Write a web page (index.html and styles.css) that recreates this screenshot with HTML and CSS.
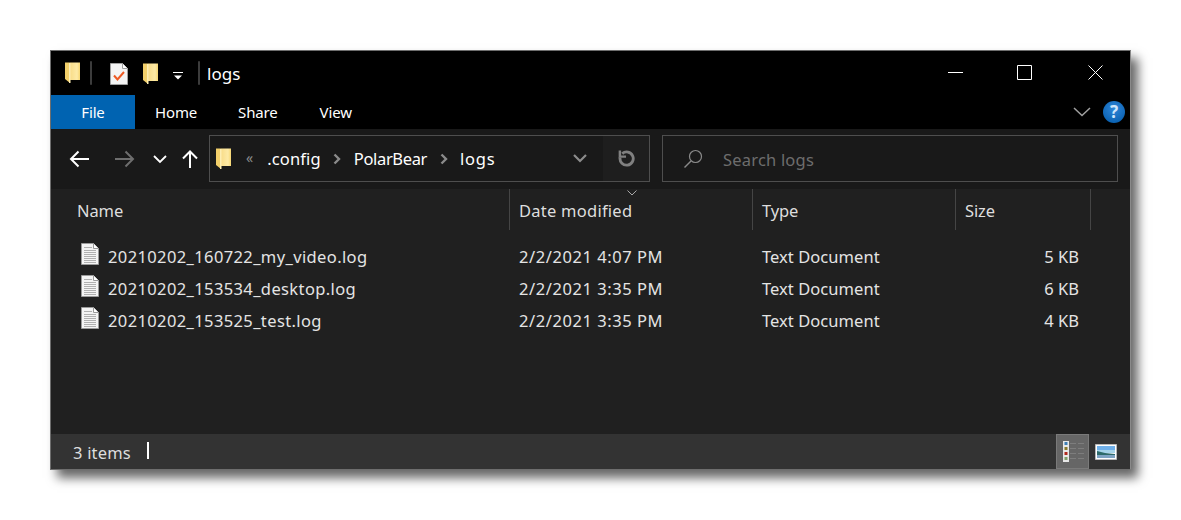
FILE: index.html
```html
<!DOCTYPE html>
<html lang="en">
<head>
<meta charset="utf-8">
<title>logs</title>
<link rel="stylesheet" href="styles.css">
</head>
<body>
<svg class="defs" width="0" height="0" aria-hidden="true">
  <defs>
    <linearGradient id="fg" x1="0" y1="0" x2="1" y2="0"><stop offset="0" stop-color="#f8dc88"/><stop offset=".7" stop-color="#fdeaa6"/><stop offset="1" stop-color="#f6d672"/></linearGradient>
    <symbol id="folder" viewBox="0 0 15 21">
      <path d="M5 .5h10v17.500H5z" fill="url(#fg)"/>
      <path d="M0 .5h5v20.500L0 17z" fill="#f2cf6a"/>
      <path d="M4 1h1.500v20H4z" fill="#fdeeb4"/>
    </symbol>
    <symbol id="doc" viewBox="0 0 18 22">
      <path d="M.5.500h12l5 5v16H.5z" fill="#f4f4f4" stroke="#9a9a9a"/>
      <path d="M12.500.500v5h5" fill="#fff" stroke="#9a9a9a"/>
      <path d="M3 4.500h8M3 7.500h12M3 9.500h12M3 11.500h12M3 13.500h12M3 15.500h12M3 17.500h12M3 19.500h12" stroke="#b0b0b0" fill="none"/>
    </symbol>
  </defs>
</svg>
<main class="window">
  <header class="titlebar">
    <svg class="qa-folder-a"><use href="#folder"/></svg>
    <span class="qa-sep qa-sep-a"></span>
    <svg class="qa-check" viewBox="0 0 18 22">
      <path d="M.5.500h12l5 5v16H.5z" fill="#f4f4f4" stroke="#a0a0a0"/>
      <path d="M12.500.500v5h5" fill="#fff" stroke="#a0a0a0"/>
      <path d="M4 12.500l3.500 4L14 9" fill="none" stroke="#ee5a24" stroke-width="2"/>
    </svg>
    <svg class="qa-folder-b"><use href="#folder"/></svg>
    <svg class="qa-drop" viewBox="0 0 10 8"><path d="M0 .5h10" stroke="#fff"/><path d="M1 3.500h8L5 7.500z" fill="#fff"/></svg>
    <span class="qa-sep qa-sep-b"></span>
    <span class="title">logs</span>
    <div class="caption">
      <svg class="cap-btn" viewBox="0 0 15 15"><path d="M0 7.500h15" stroke="#fff"/></svg>
      <svg class="cap-btn" viewBox="0 0 15 15"><path d="M.5.500h14v14H.5z" fill="none" stroke="#fff"/></svg>
      <svg class="cap-btn" viewBox="0 0 15 15"><path d="M.5.500l14 14M14.500.500l-14 14" fill="none" stroke="#fff"/></svg>
    </div>
  </header>
  <nav class="ribbon">
    <span class="tab tab-file">File</span>
    <span class="tab tab-home">Home</span>
    <span class="tab tab-share">Share</span>
    <span class="tab tab-view">View</span>
    <svg class="rib-chev" viewBox="0 0 18 10"><path d="M1 1l8 7.500L17 1" fill="none" stroke="#a0a0a0" stroke-width="1.500"/></svg>
    <span class="help">?</span>
  </nav>
  <section class="navbar">
    <svg class="nav-back" viewBox="0 0 20 20"><path d="M20 10H2M9.500 2.500 2 10l7.500 7.500" fill="none" stroke="#fff" stroke-width="2"/></svg>
    <svg class="nav-fwd" viewBox="0 0 20 20"><path d="M0 10h18M10.500 2.500 18 10l-7.500 7.500" fill="none" stroke="#6e6e6e" stroke-width="2"/></svg>
    <svg class="nav-down" viewBox="0 0 14 9"><path d="M1 1l6 6 6-6" fill="none" stroke="#fff" stroke-width="1.800"/></svg>
    <svg class="nav-up" viewBox="0 0 16 18"><path d="M8 18V1.500M1 8.500 8 1.500l7 7" fill="none" stroke="#fff" stroke-width="2"/></svg>
    <div class="address">
      <svg class="addr-folder"><use href="#folder"/></svg>
      <span class="crumb-more">«</span>
      <span class="crumb crumb-config">.config</span>
      <svg class="crumb-sep" viewBox="0 0 8 12"><path d="M1.500 1.500 6 6l-4.500 4.500" fill="none" stroke="#8a8a8a" stroke-width="2.400"/></svg>
      <span class="crumb crumb-polar">PolarBear</span>
      <svg class="crumb-sep" viewBox="0 0 8 12"><path d="M1.500 1.500 6 6l-4.500 4.500" fill="none" stroke="#8a8a8a" stroke-width="2.400"/></svg>
      <span class="crumb crumb-logs">logs</span>
      <svg class="addr-chev" viewBox="0 0 14 9"><path d="M1 1l6 6 6-6" fill="none" stroke="#8c8c8c" stroke-width="2.200"/></svg>
      <div class="refresh">
        <svg viewBox="0 0 18 18"><path d="M4.500 3.800A7 7 0 1 1 2.200 8" fill="none" stroke="#808080" stroke-width="3"/><path d="M2 .5v6.500h6.500" fill="none" stroke="#808080" stroke-width="2.600"/></svg>
      </div>
    </div>
    <div class="search">
      <svg class="search-icon" viewBox="0 0 20 20"><circle cx="12.500" cy="7.500" r="6" fill="none" stroke="#8a8a8a" stroke-width="1.200"/><path d="M8 12 1.500 18.500" stroke="#8a8a8a" stroke-width="1.400"/></svg>
      <span class="search-text">Search logs</span>
    </div>
  </section>
  <section class="list">
    <div class="cols">
      <div class="col col-name">Name</div>
      <div class="col col-date">Date modified<svg class="sort" viewBox="0 0 10 6"><path d="M.5.500 5 5 9.500.500" fill="none" stroke="#a8a8a8"/></svg></div>
      <div class="col col-type">Type</div>
      <div class="col col-size">Size</div>
    </div>
    <div class="row">
      <div class="cell-name"><svg class="doc"><use href="#doc"/></svg>20210202_160722_my_video.log</div>
      <div class="cell cell-date">2/2/2021 4:07 PM</div>
      <div class="cell">Text Document</div>
      <div class="cell cell-size">5 KB</div>
    </div>
    <div class="row">
      <div class="cell-name"><svg class="doc"><use href="#doc"/></svg>20210202_153534_desktop.log</div>
      <div class="cell cell-date">2/2/2021 3:35 PM</div>
      <div class="cell">Text Document</div>
      <div class="cell cell-size">6 KB</div>
    </div>
    <div class="row">
      <div class="cell-name"><svg class="doc"><use href="#doc"/></svg>20210202_153525_test.log</div>
      <div class="cell cell-date">2/2/2021 3:35 PM</div>
      <div class="cell">Text Document</div>
      <div class="cell cell-size">4 KB</div>
    </div>
  </section>
  <footer class="status">
    <span class="count">3 items</span>
    <span class="status-sep"></span>
    <div class="view-btn view-on">
      <svg viewBox="0 0 22 22" width="22" height="22">
        <path d="M1 0h6v21H1z" fill="#e8e8e8"/>
        <path d="M2.500 1h3v3h-3z" fill="#3f7fb5"/><path d="M2.500 6h3v3h-3z" fill="#8a7a2c"/><path d="M2.500 11h3v3h-3z" fill="#b02a1e"/><path d="M2.500 16h3v3h-3z" fill="#7fa06a"/>
        <path d="M8 2.500h6M16 2.500h6M8 7.500h6M16 7.500h6M8 12.500h6M16 12.500h6M8 17.500h6M16 17.500h6" stroke="#7d7d7d"/>
      </svg>
    </div>
    <div class="view-btn view-pic">
      <svg viewBox="0 0 22 16" width="22" height="16">
        <path d="M.5.500h21v15H.5z" fill="#fff" stroke="#b8b8b8"/>
        <path d="M2 2h18v5H2z" fill="#6fb0ea"/>
        <path d="M2 6h18v3H2z" fill="#a6d4ea"/>
        <path d="M2 7l8 2 10 1v3H2z" fill="#2e6b6a"/>
        <path d="M2 11h18v3H2z" fill="#7fa4c4"/>
      </svg>
    </div>
  </footer>
</main>
</body>
</html>
```
FILE: styles.css
```css
html, body { margin: 0; padding: 0; background: #fff; }
body {
  padding: 50px 50px 0;
  font-family: "Noto Sans", "Open Sans", sans-serif;
  color: #fff;
  height: 520px;
  box-sizing: border-box;
  overflow: hidden;
}
.defs { position: absolute; }
.window {
  width: 1081px;
  height: 420px;
  box-sizing: border-box;
  border: 1px solid #6e6e6e;
  border-right-color: #8a8a8a;
  display: flex;
  flex-direction: column;
  background: #202020;
  box-shadow: 7px 8px 10px rgba(0, 0, 0, .6);
}

/* title bar */
.titlebar {
  height: 44px;
  background: #000;
  display: flex;
  align-items: center;
  flex: none;
}
.qa-folder-a { width: 15px; height: 21px; margin: -1px 0 0 14px; }
.qa-sep { width: 2px; height: 24px; background: #3c3c3c; border-radius: 1px; }
.qa-sep-a { margin-left: 10px; }
.qa-check { width: 18px; height: 22px; margin: 1px 0 0 18px; }
.qa-folder-b { width: 15px; height: 21px; margin: 1px 0 0 15px; }
.qa-drop { width: 10px; height: 8px; margin: 5px 0 0 15px; }
.qa-sep-b { margin-left: 15px; }
.title { font-size: 17px; margin-left: 7px; }
.caption { display: flex; align-items: center; gap: 56px; margin: -2px 27px 0 auto; }
.cap-btn { width: 15px; height: 15px; }
.cap-btn:first-child { margin-right: -2px; }

/* ribbon */
.ribbon {
  height: 34px;
  background: #000;
  display: flex;
  align-items: center;
  flex: none;
  font-size: 15px;
}
.tab { display: flex; align-items: center; justify-content: center; height: 100%; letter-spacing: -.15px; }
.tab-file { width: 84px; background: #0063b1; }
.tab-home { margin-left: 20px; }
.tab-share { margin-left: 41px; }
.tab-view { margin-left: 42px; }
.rib-chev { width: 18px; height: 10px; margin-left: auto; }
.help {
  width: 22px; height: 22px;
  margin: 0 5px 0 12px;
  border-radius: 50%;
  background: radial-gradient(circle at 50% 35%, #2f86d8, #0058a8);
  font: bold 17px/22px "Noto Sans", sans-serif;
  text-align: center;
  color: #cfe6fb;
}

/* navigation */
.navbar {
  height: 60px;
  background: #191919;
  display: flex;
  align-items: center;
  flex: none;
}
.nav-back { width: 20px; height: 20px; margin-left: 18px; }
.nav-fwd { width: 20px; height: 20px; margin-left: 26px; }
.nav-down { width: 14px; height: 9px; margin-left: 18px; }
.nav-up { width: 16px; height: 18px; margin-left: 15px; }
.address {
  margin: -1px 0 0 11px;
  width: 441px;
  height: 47px;
  box-sizing: border-box;
  border: 1px solid #4e4e4e;
  display: flex;
  align-items: center;
}
.addr-folder { width: 15px; height: 21px; margin: 0 0 0 6px; }
.crumb-more { color: #8a8a8a; font-size: 14px; margin: -2px 0 0 15px; }
.crumb { font-size: 16.500px; }
.crumb-config { margin-left: 14px; letter-spacing: .15px; }
.crumb-polar { letter-spacing: -.35px; }
.crumb-logs { letter-spacing: .75px; }
.crumb-sep { width: 8px; height: 12px; margin: 0 12.500px; }
.addr-chev { width: 14px; height: 9px; margin-left: auto; }
.refresh {
  width: 46px; height: 100%;
  margin-left: 16px;
  background: #1e1e1e;
  display: flex; align-items: center; justify-content: center;
}
.refresh svg { width: 17px; height: 17px; }
.search {
  margin: -1px 0 0 12px;
  width: 456px;
  height: 47px;
  box-sizing: border-box;
  border: 1px solid #4e4e4e;
  display: flex;
  align-items: center;
}
.search-icon { width: 20px; height: 20px; margin-left: 20px; }
.search-text { color: #6d6d6d; font-size: 16.500px; margin: 1px 0 0 20px; letter-spacing: .2px; }

/* list */
.list { flex: 1; background: #202020; }
.cols, .row {
  display: grid;
  grid-template-columns: 458px 243px 203px 135px;
}
.cols { height: 41px; font-size: 16.500px; color: #dedede; letter-spacing: -.1px; }
.col { padding: 2px 0 0 9px; display: flex; align-items: center; position: relative; margin-right: -1px; box-sizing: border-box; }
.col-name { padding-left: 26px; }
.col-date, .col-type, .col-size { border-left: 1px solid #454545; }
.col-date { letter-spacing: .25px; }
.col-size { border-right: 1px solid #454545; }
.sort { position: absolute; left: 117px; top: 1px; width: 10px; height: 6px; }
.row { height: 32px; align-items: center; font-size: 16.500px; color: #e4e4e4; letter-spacing: .05px; }
.row:nth-child(2) { margin-top: 10px; }
.cell { padding-left: 10px; }
.cell-name { display: flex; align-items: center; padding-left: 30px; letter-spacing: .38px; }
.cell-date { letter-spacing: .56px; }
.doc { width: 18px; height: 22px; margin: -5px 9px 0 0; }
.cell-size { text-align: right; padding-right: 11px; }

/* status */
.status {
  height: 35px;
  background: #333;
  display: flex;
  align-items: center;
  flex: none;
  font-size: 16.500px;
  letter-spacing: .2px;
  color: #dedede;
}
.count { margin: 2px 0 0 22px; }
.status-sep { width: 2px; height: 17px; background: #fff; margin: -3px 0 0 16px; }
.view-btn { height: 35px; display: flex; align-items: center; justify-content: center; flex: none; }
.view-on { width: 33px; margin-left: auto; background: #666; border: 1px solid #7a7a7a; box-sizing: border-box; }
.view-pic { width: 34px; margin-right: 7px; }
```
